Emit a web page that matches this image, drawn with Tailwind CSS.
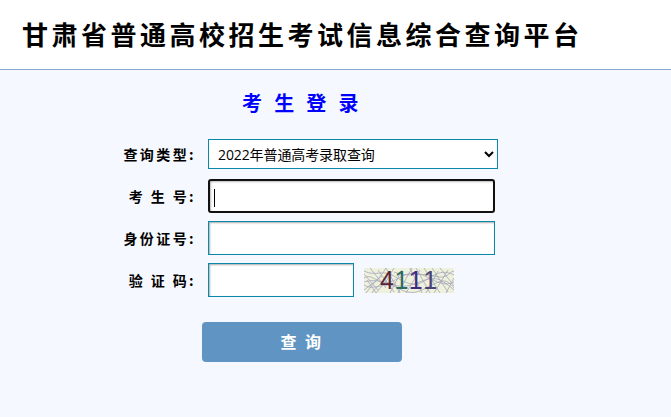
<!DOCTYPE html>
<html lang="zh-CN">
<head>
    <meta charset="UTF-8">
    <title>甘肃省普通高校招生考试信息综合查询平台</title>
    <script src="https://cdn.jsdelivr.net/npm/@tailwindcss/browser@4"></script>
</head>
<body class="bg-[#f5f8fe] font-['Noto_Sans_CJK_SC',sans-serif] h-[417px] overflow-hidden">

    <!-- 顶部标题 -->
    <header class="h-[70px] bg-white border-b border-[#8aa5cc] pl-[22px] pb-[2px] flex items-center">
        <h1 class="text-[26px] font-bold text-black tracking-[3.5px] leading-none">甘肃省普通高校招生考试信息综合查询平台</h1>
    </header>

    <main>
        <h2 class="mt-[19px] ml-[242px] h-[28px] text-[20px] leading-[28px] font-bold text-[#0000ff] tracking-[3.8px] whitespace-pre">考 生 登 录</h2>

        <form class="mt-[22px]">
            <div class="flex items-center h-[30px]">
                <label class="w-[196px] text-right text-[14px] font-bold text-black tracking-[2.4px]">查询类型:</label>
                <select class="ml-[12px] w-[290px] h-[30px] bg-white border border-[#0a8aa8] pl-[5px] text-[14px] tracking-[-0.1px] text-black font-['Open_Sans','Noto_Sans_CJK_SC',sans-serif]">
                    <option>2022年普通高考录取查询</option>
                </select>
            </div>
            <div class="flex items-center h-[34px] mt-[10px]">
                <label class="w-[196px] text-right text-[14px] font-bold text-black tracking-[2.4px] whitespace-pre">考 生 号:</label>
                <div class="relative ml-[12px]">
                    <input type="text" class="block w-[287px] h-[34px] bg-white border-[2px] border-[#111] rounded-[3px] shadow-[inset_1px_1px_2px_#bbb] outline-none">
                    <span class="absolute left-[6px] top-[10px] w-px h-[18px] bg-black"></span>
                </div>
            </div>
            <div class="flex items-center h-[34px] mt-[8px]">
                <label class="w-[196px] text-right text-[14px] font-bold text-black tracking-[2.4px]">身份证号:</label>
                <input type="text" class="ml-[12px] w-[287px] h-[34px] bg-white border border-[#0a8aa8] shadow-[inset_1px_1px_2px_#aaa] outline-none">
            </div>
            <div class="flex items-center h-[34px] mt-[8px]">
                <label class="w-[196px] text-right text-[14px] font-bold text-black tracking-[2.4px] whitespace-pre">验 证 码:</label>
                <input type="text" class="ml-[12px] w-[146px] h-[34px] bg-white border border-[#0a8aa8] shadow-[inset_1px_1px_2px_#aaa] outline-none">
                <!-- 验证码 -->
                <div class="relative ml-[10px] w-[90px] h-[25px]">
                    <svg class="absolute inset-0" width="90" height="25" viewBox="0 0 90 25">
                        <rect width="90" height="25" fill="#eef2dc"/>
                        <g fill="none" stroke="#a6a6ba" stroke-width="0.8">
                            <path d="M0 3 C12 9 18 1 30 8 S50 20 62 12 S80 2 90 7"/>
                            <path d="M0 10 C8 4 14 18 26 14 S44 2 56 6 S78 20 90 14"/>
                            <path d="M2 25 C10 14 16 10 22 0"/>
                            <path d="M8 25 C14 16 24 12 30 0"/>
                            <path d="M0 17 C10 24 20 12 34 20 S54 24 66 18 S82 10 90 20"/>
                            <path d="M0 6 L14 22 M6 0 L22 20 M14 2 L30 24 M3 12 L12 25 M22 0 L36 25"/>
                            <path d="M52 0 L66 25 M60 0 L76 25 M68 0 L84 24 M76 0 L90 18 M46 0 L58 25"/>
                            <path d="M34 25 L48 0 M42 25 L56 2 M70 25 L84 2 M26 25 L38 2"/>
                            <path d="M0 22 L18 8 M12 25 L28 6 M82 25 L90 10 M62 25 L74 3"/>
                            <path d="M30 4 C44 10 56 4 70 8 S84 4 90 3"/>
                            <path d="M0 14 C20 8 30 24 50 16 S74 8 90 22"/>
                        </g>
                    </svg>
                    <div class="relative flex gap-[0.5px] pl-[16px] text-[25px] leading-[25px] font-['Liberation_Sans',sans-serif]">
                        <span class="text-[#5c2433]">4</span>
                        <span class="text-[#2b6b62]">1</span>
                        <span class="text-[#3f2a80]">1</span>
                        <span class="text-[#4a4474]">1</span>
                    </div>
                </div>
            </div>
            <button type="button" class="block ml-[202px] mt-[25px] w-[200px] h-[40px] pb-[2px] bg-[#6095c3] rounded-[4px] text-white text-[16px] font-bold tracking-[2.5px] whitespace-pre">查 询</button>
        </form>
    </main>
</body>
</html>
